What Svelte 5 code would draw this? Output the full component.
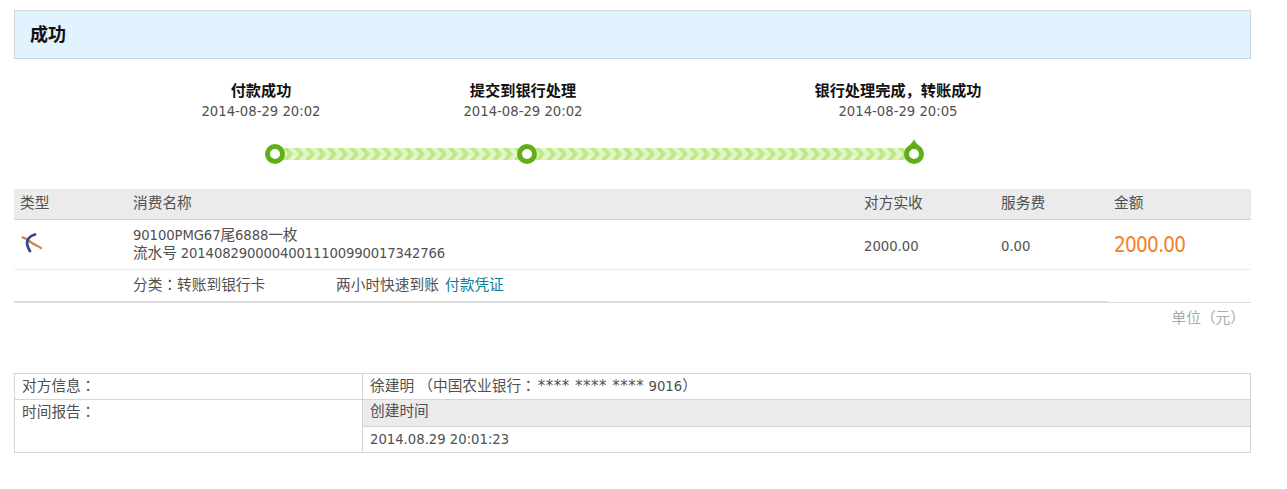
<script>
  const steps = [
    { title: '付款成功', time: '2014-08-29 20:02', cls: 's1' },
    { title: '提交到银行处理', time: '2014-08-29 20:02', cls: 's2' },
    { title: '银行处理完成，转账成功', time: '2014-08-29 20:05', cls: 's3' }
  ];
</script>

<div class="page">
  <div class="banner">成功</div>

  <div class="steps">
    {#each steps as s}
      <div class="step {s.cls}">
        <div class="step-title">{s.title}</div>
        <div class="step-time">{s.time}</div>
      </div>
    {/each}
  </div>

  <div class="track">
    <span class="dot"></span>
    <svg class="bar" width="236" height="12">
      <defs>
        <pattern id="chev" width="11" height="12" patternUnits="userSpaceOnUse">
          <rect width="11" height="12" fill="#e2f5c4"/>
          <path d="M0 0 H5 L10 6 L5 12 H0 L5 6Z" fill="#c1e78c"/>
        </pattern>
      </defs>
      <rect width="236" height="12" fill="url(#chev)"/>
    </svg>
    <span class="dot"></span>
    <svg class="bar" width="371" height="12">
      <rect width="371" height="12" fill="url(#chev)"/>
    </svg>
    <span class="dot last">
      <svg class="tip" width="10" height="7" viewBox="0 0 10 7"><path d="M5 0 C5.5 2 7 3.5 10 7 H0 C3 3.5 4.5 2 5 0Z" fill="#5fae1a"/></svg>
    </span>
  </div>

  <table class="bill">
    <colgroup>
      <col style="width:113px" /><col style="width:731px" /><col style="width:137px" /><col style="width:113px" /><col />
    </colgroup>
    <thead>
      <tr><th>类型</th><th>消费名称</th><th>对方实收</th><th>服务费</th><th>金额</th></tr>
    </thead>
    <tbody>
      <tr class="main">
        <td>
          <svg class="logo" width="24" height="24" viewBox="0 0 24 24" fill="none" stroke-linecap="round">
            <path d="M2.5 6.5 C6 7 9 10 12 12 C15 14 18 15 21 17" stroke="#c98a58" stroke-width="2.4"/>
            <path d="M15 3.5 C11 4.5 8 7 7.2 10.5 C6.8 13.5 8 17 10 20" stroke="#34478f" stroke-width="2.8"/>
          </svg>
        </td>
        <td class="name">90100PMG67尾6888一枚<br />流水号 <span class="serial">20140829000040011100990017342766</span></td>
        <td class="num">2000.00</td>
        <td class="num">0.00</td>
        <td class="num amount">2000.00</td>
      </tr>
      <tr class="sub">
        <td></td>
        <td colspan="4"><span class="cat">分类<span class="c">：</span>转账到银行卡</span><span>两小时快速到账 <a href="#top">付款凭证</a></span></td>
      </tr>
    </tbody>
  </table>
  <div class="rule"><span></span></div>

  <div class="unit">单位<span class="c">（</span>元<span class="c">）</span></div>

  <div class="info">
    <div class="cell lbl r1">对方信息<span class="c">：</span></div>
    <div class="cell val r1">徐建明 <span class="c">（</span>中国农业银行<span class="c">：</span><span class="stars">**** **** ****</span> 9016<span class="c">）</span></div>
    <div class="cell lbl r2">时间报告<span class="c">：</span></div>
    <div class="cell val r2">
      <div class="head">创建时间</div>
      <div class="when">2014.08.29 20:01:23</div>
    </div>
  </div>
</div>

<style>
  :global(body) {
    margin: 0;
    background: #fff;
  }
  .page {
    width: 1237px;
    padding: 10px 0 0 14px;
    font-family: "DejaVu Sans Condensed", "DejaVu Sans", "Noto Sans CJK SC", sans-serif;
    font-size: 14.7px;
    color: #505050;
  }
  .page :global(*) {
    box-sizing: border-box;
  }
  .c {
    font-family: "Noto Sans CJK TC", sans-serif;
  }
  .banner {
    height: 49px;
    line-height: 47px;
    padding-left: 15px;
    background: #e1f3ff;
    border: 1px solid #ccd9e3;
    font-size: 18px;
    font-weight: bold;
    color: #111;
  }
  .steps {
    display: flex;
    height: 85px;
    padding-top: 22px;
  }
  .step {
    width: 240px;
    text-align: center;
    line-height: 20px;
  }
  .s1 { margin-left: 127px; }
  .s2 { margin-left: 22px; }
  .s3 { margin-left: 135px; }
  .step-title {
    font-size: 15.2px;
    font-weight: bold;
    color: #111;
  }
  .track {
    display: flex;
    align-items: center;
    height: 20px;
    margin: 0 0 25px 251px;
  }
  .dot {
    position: relative;
    flex: none;
    width: 20px;
    height: 20px;
    border-radius: 50%;
    border: 5.5px solid #5fae1a;
    background: #fff;
    z-index: 1;
  }
  .tip {
    position: absolute;
    left: -0.5px;
    top: -10px;
  }
  .bar {
    flex: none;
    display: block;
    margin: 0 -2px;
    filter: blur(0.6px);
  }
  .bill {
    width: 1237px;
    border-collapse: collapse;
    table-layout: fixed;
  }
  .bill th {
    height: 30px;
    padding: 0 0 4px 6px;
    background: #ebebeb;
    border-bottom: 1px solid #d5d5d5;
    font-weight: normal;
    text-align: left;
  }
  .bill td {
    padding: 0 0 0 6px;
    vertical-align: middle;
  }
  .main td {
    height: 50px;
    border-bottom: 1px solid #ececec;
  }
  .bill .num {
    padding-top: 2px;
  }
  .name {
    line-height: 18px;
    letter-spacing: -0.1px;
  }
  .serial {
    letter-spacing: -0.15px;
  }
  .logo {
    display: block;
    margin-top: -2px;
    filter: blur(0.3px);
  }
  .amount {
    font-size: 20.5px;
    letter-spacing: -0.7px;
    color: #f0812a;
  }
  .bill .sub td {
    height: 32px;
    padding-bottom: 4px;
  }
  .cat {
    display: inline-block;
    width: 203px;
  }
  a {
    margin-left: 2px;
    color: #0a7d96;
    text-decoration: none;
  }
  .rule {
    height: 2px;
    border-bottom: 1px solid #dcdcdc;
  }
  .rule span {
    display: block;
    width: 1094px;
    height: 2px;
    background: #dcdcdc;
  }
  .unit {
    height: 70px;
    padding: 4px 6px 0 0;
    line-height: 20px;
    text-align: right;
    color: #aaa;
  }
  .info {
    display: grid;
    grid-template-columns: 348px 1fr;
    width: 1237px;
    border: 1px solid #d5d5d5;
  }
  .cell {
    padding: 0 7px;
    line-height: 22px;
  }
  .stars {
    margin-left: 2px;
    font-family: "DejaVu Sans", sans-serif;
    font-size: 15px;
    letter-spacing: 0.5px;
  }
  .lbl {
    border-right: 1px solid #d5d5d5;
  }
  .r1 {
    height: 26px;
    border-bottom: 1px solid #d5d5d5;
  }
  .val.r2 {
    padding: 0;
  }
  .head {
    height: 27px;
    padding-left: 7px;
    background: #ebebeb;
    border-bottom: 1px solid #d5d5d5;
  }
  .when {
    height: 25px;
    padding-left: 7px;
    line-height: 23px;
  }
</style>
